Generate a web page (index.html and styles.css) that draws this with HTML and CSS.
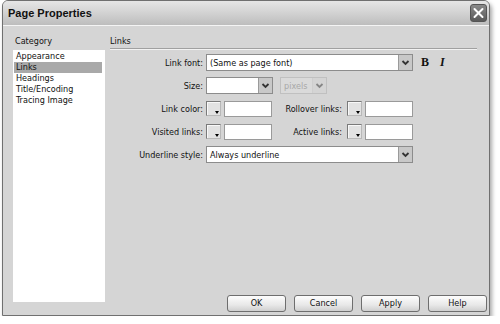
FILE: index.html
```html
<!DOCTYPE html>
<html>
  <head>
    <title>Page Properties</title>
    <link rel="stylesheet" href="styles.css">
  </head>
  <body>
    <div class="dialog">
      <div class="titlebar">
        <span class="title">Page Properties</span>
        <span class="close">
          <svg width="15" height="16" viewBox="0 0 15 16">
            <path d="M3.5 4 L11.5 12 M11.5 4 L3.5 12" stroke="#fff" stroke-width="2" stroke-linecap="round" />
          </svg>
        </span>
      </div>
      <div class="content">
        <div class="side">
          <div class="heading">Category</div>
          <ul class="category-list">
            <li>Appearance</li>
            <li class="selected">Links</li>
            <li>Headings</li>
            <li>Title/Encoding</li>
            <li>Tracing Image</li>
          </ul>
        </div>
        <div class="main">
          <div class="heading section">Links</div>
          <div class="form">
            <div class="row">
              <span class="label">Link font:</span>
              <span class="select wide"><span class="value">(Same as page font)</span><span class="arrow"></span></span>
              <span class="style-btn bold">B</span>
              <span class="style-btn italic">I</span>
            </div>
            <div class="row">
              <span class="label">Size:</span>
              <span class="select small"><span class="value"></span><span class="arrow"></span></span>
              <span class="select unit disabled"><span class="value">pixels</span><span class="arrow"></span></span>
            </div>
            <div class="row">
              <span class="label">Link color:</span>
              <span class="swatch"><span class="swatch-arrow"></span></span>
              <span class="text-input"></span>
              <span class="label right-label">Rollover links:</span>
              <span class="swatch"><span class="swatch-arrow"></span></span>
              <span class="text-input"></span>
            </div>
            <div class="row">
              <span class="label">Visited links:</span>
              <span class="swatch"><span class="swatch-arrow"></span></span>
              <span class="text-input"></span>
              <span class="label right-label">Active links:</span>
              <span class="swatch"><span class="swatch-arrow"></span></span>
              <span class="text-input"></span>
            </div>
            <div class="row">
              <span class="label">Underline style:</span>
              <span class="select wide"><span class="value">Always underline</span><span class="arrow"></span></span>
            </div>
          </div>
          <div class="buttons">
            <span class="button">OK</span>
            <span class="button">Cancel</span>
            <span class="button">Apply</span>
            <span class="button">Help</span>
          </div>
        </div>
      </div>
    </div>
  </body>
</html>
```

FILE: styles.css
```css
body {
  margin: 0;
  background: #fff;
  font-family: "DejaVu Sans Condensed", "Liberation Sans", sans-serif;
  font-size: 9px;
  color: #111;
}
.dialog {
  margin-left: 2px;
  width: 486px;
  height: 314px;
  background: #d5d5d5;
  border: 1px solid #707070;
  border-radius: 6px 6px 0 0;
  box-shadow: 2px 3px 4px rgba(0, 0, 0, 0.35);
  display: flex;
  flex-direction: column;
}
.titlebar {
  height: 24px;
  border-radius: 5px 5px 0 0;
  background: linear-gradient(#e6e6e6, #d4d4d4 45%, #bdbdbd);
  border-bottom: 1px solid #f4f4f4;
  display: flex;
  align-items: center;
  justify-content: space-between;
  padding: 0 2px 0 5px;
}
.title {
  font-family: "Liberation Sans", sans-serif;
  font-weight: bold;
  font-size: 11px;
  color: #111;
}
.close {
  width: 15px;
  height: 16px;
  background: linear-gradient(#8a8a8a, #5a5a5a);
  border: 1px solid #555;
  border-radius: 3px;
  display: flex;
}
.content {
  flex: 1;
  display: flex;
  padding: 8px 7px 3px 10px;
  gap: 5px;
}
.side {
  width: 92px;
}
.heading {
  height: 14px;
  line-height: 14px;
  padding-left: 2px;
}
.category-list {
  list-style: none;
  margin: 2px 0 0;
  padding: 1px 0 0;
  height: 251px;
  background: #fff;
}
.category-list li {
  height: 11px;
  line-height: 11px;
  padding-left: 2px;
  margin: 0 3px 0 1px;
}
.category-list .selected {
  background: #a9a9a9;
}
.main {
  flex: 1;
  display: flex;
  flex-direction: column;
}
.section {
  margin-right: 5px;
  padding-left: 0;
  border-bottom: 1px solid #a0a0a0;
  box-shadow: 0 1px 0 #f2f2f2;
}
.form {
  margin-top: 5px;
  display: flex;
  flex-direction: column;
  gap: 6px;
}
.row {
  height: 17px;
  display: flex;
  align-items: center;
}
.label {
  width: 93px;
  text-align: right;
  margin-right: 3px;
}
.right-label {
  width: 70px;
  margin-right: 5px;
}
.select {
  height: 15px;
  background: #fff;
  border: 1px solid #8c8c8c;
  display: flex;
  align-items: center;
}
.select .value {
  flex: 1;
  padding-left: 3px;
}
.select .arrow {
  width: 13px;
  height: 15px;
  background: #c8c8c8 url("data:image/svg+xml,%3Csvg xmlns='http://www.w3.org/2000/svg' width='13' height='15'%3E%3Cpath d='M3.5 6 L6.5 9 L9.5 6' fill='none' stroke='%23333' stroke-width='1.8'/%3E%3C/svg%3E") no-repeat center;
  border-left: 1px solid #9a9a9a;
}
.wide {
  width: 205px;
}
.small {
  width: 65px;
  margin-right: 7px;
}
.unit {
  width: 45px;
}
.disabled {
  background: #dadada;
  border-color: #c0c0c0;
  color: #a8a8a8;
}
.disabled .arrow {
  background-color: #d0d0d0;
  border-left-color: #c4c4c4;
  opacity: 0.5;
}
.style-btn {
  font-family: "Liberation Serif", serif;
  font-weight: bold;
  font-size: 12px;
  margin-left: 8px;
  width: 10px;
}
.italic {
  font-style: italic;
  margin-left: 9px;
}
.swatch {
  position: relative;
  width: 13px;
  height: 13px;
  border: 1px solid #7a7a7a;
  border-right-color: #b8b8b8;
  border-bottom-color: #b8b8b8;
  background: #e2e2e2;
  box-shadow: inset 1px 1px 0 #f8f8f8;
  margin-right: 3px;
}
.swatch-arrow {
  position: absolute;
  right: 1px;
  bottom: 1px;
  width: 0;
  height: 0;
  border-left: 2.5px solid transparent;
  border-right: 2.5px solid transparent;
  border-top: 3px solid #000;
}
.text-input {
  width: 46px;
  height: 14px;
  background: #fff;
  border: 1px solid #9a9a9a;
}
.buttons {
  margin-top: auto;
  margin-right: -5px;
  display: flex;
  justify-content: flex-end;
  gap: 8px;
}
.button {
  width: 57px;
  height: 15px;
  line-height: 15px;
  text-align: center;
  border: 1px solid #6e6e6e;
  border-radius: 3px;
  background: linear-gradient(#fdfdfd, #e8e8e8 60%, #cfcfcf);
}
```
